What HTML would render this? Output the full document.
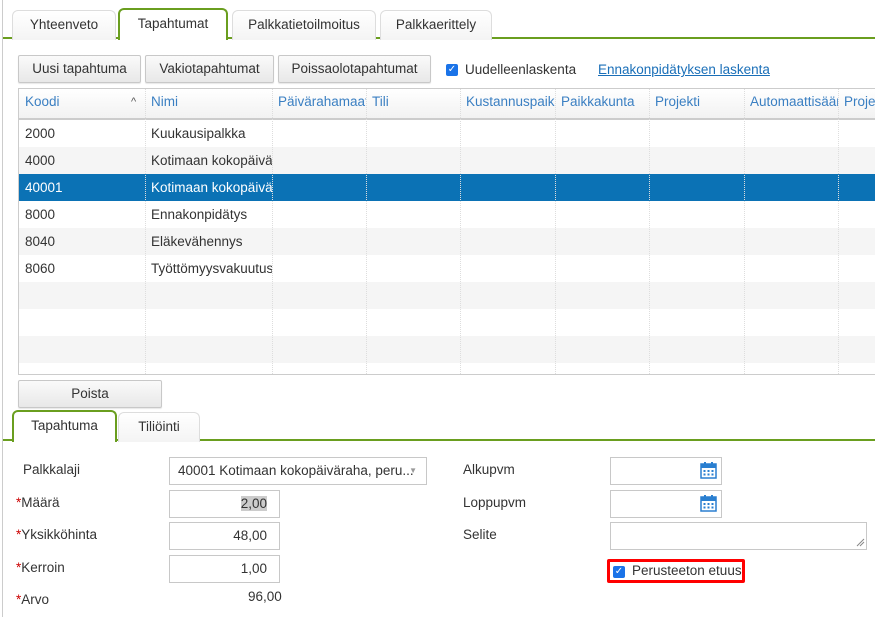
<!DOCTYPE html>
<html><head><meta charset="utf-8"><style>
*{box-sizing:border-box;margin:0;padding:0}
body{width:875px;height:617px;overflow:hidden;background:#fff;font-family:"Liberation Sans","DejaVu Sans",sans-serif;font-size:13px;color:#333;position:relative}
.a{position:absolute}
.tab{position:absolute;height:30px;border:1px solid #ddd;border-bottom:none;border-radius:6px 6px 0 0;background:linear-gradient(#fff,#f4f4f4);text-align:center;line-height:28px;font-size:13.5px;color:#333}
.tab.on{border:2px solid #6a9e1f;border-bottom:none;background:#fff;height:32px;z-index:2}
.btn{position:absolute;height:28px;border:1px solid #c8c8c8;border-radius:2px;background:linear-gradient(#fafafa,#e8e8e8);text-align:center;line-height:26px;font-size:13.5px;color:#333;box-shadow:0 1px 1px rgba(0,0,0,.1)}
.hd{position:absolute;top:88px;height:32px;line-height:28px;color:#3a7fc2;font-size:13.5px;padding-left:6px;white-space:nowrap;overflow:hidden}
.row{position:absolute;left:19px;width:856px;height:27px;line-height:27px;font-size:13.5px}
.vl{position:absolute;top:89px;height:285px;border-left:1px dotted #ddd}
.inp{position:absolute;border:1px solid #c8c8c8;background:#fff;height:28px;text-align:right;padding-right:12px;line-height:26px;font-size:13.5px}
.lbl{position:absolute;font-size:13.5px;color:#333}
.req{color:#c00}
svg.cal{position:absolute;width:17px;height:18px}
</style></head><body>
<div class="a" style="left:2px;top:0;width:1px;height:617px;background:#ccc"></div>
<div class="a" style="left:3px;top:37px;width:872px;height:2px;background:#6a9e1f"></div>
<div class="tab" style="left:12px;top:10px;width:104px">Yhteenveto</div>
<div class="tab on" style="left:118px;top:8px;width:110px">Tapahtumat</div>
<div class="tab" style="left:232px;top:10px;width:144px">Palkkatietoilmoitus</div>
<div class="tab" style="left:380px;top:10px;width:112px">Palkkaerittely</div>
<div class="btn" style="left:18px;top:55px;width:123px">Uusi tapahtuma</div>
<div class="btn" style="left:145px;top:55px;width:129px">Vakiotapahtumat</div>
<div class="btn" style="left:278px;top:55px;width:153px">Poissaolotapahtumat</div>
<div class="a" style="left:446px;top:64px;width:12px;height:12px;background:#1a73e8;border-radius:2px;color:#fff;font-size:10px;line-height:12px;text-align:center">✓</div>
<div class="lbl" style="left:465px;top:62px">Uudelleenlaskenta</div>
<div class="lbl" style="left:598px;top:62px;color:#1a6fb8;text-decoration:underline">Ennakonpidätyksen laskenta</div>
<div class="a" style="left:18px;top:88px;width:857px;height:287px;border:1px solid #ccc;border-right:none"></div>
<div class="a" style="left:19px;top:89px;width:856px;height:31px;background:linear-gradient(#fff,#f2f2f2);border-bottom:2px solid #ccc"></div>
<div class="row" style="top:147px;background:#f5f5f5"></div>
<div class="row" style="top:174px;background:#0b72b5"></div>
<div class="row" style="top:228px;background:#f5f5f5"></div>
<div class="row" style="top:282px;background:#f5f5f5"></div>
<div class="row" style="top:336px;background:#f5f5f5"></div>
<div class="vl" style="left:145px"></div><div class="vl" style="left:272px"></div><div class="vl" style="left:366px"></div><div class="vl" style="left:460px"></div><div class="vl" style="left:555px"></div><div class="vl" style="left:649px"></div><div class="vl" style="left:744px"></div><div class="vl" style="left:838px"></div>
<div class="hd" style="left:19px;width:126px">Koodi<span style="position:absolute;left:112px;color:#555;font-size:11px">^</span></div>
<div class="hd" style="left:145px;width:127px">Nimi</div>
<div class="hd" style="left:272px;width:94px">Päivärahamaat</div>
<div class="hd" style="left:366px;width:94px">Tili</div>
<div class="hd" style="left:460px;width:95px">Kustannuspaikka</div>
<div class="hd" style="left:555px;width:94px">Paikkakunta</div>
<div class="hd" style="left:649px;width:95px">Projekti</div>
<div class="hd" style="left:744px;width:94px">Automaattisäänt</div>
<div class="hd" style="left:838px;width:37px">Projekti</div>
<div class="a" style="left:25px;top:120px;line-height:27px;font-size:13.5px">2000<br>4000<br><span style="color:#fff">40001</span><br>8000<br>8040<br>8060</div>
<div class="a" style="left:151px;top:120px;width:121px;overflow:hidden;white-space:nowrap;line-height:27px;font-size:13.5px">Kuukausipalkka<br>Kotimaan kokopäiväraha<br><span style="color:#fff">Kotimaan kokopäiväraha</span><br>Ennakonpidätys<br>Eläkevähennys<br>Työttömyysvakuutus</div>
<div class="btn" style="left:18px;top:380px;width:144px">Poista</div>
<div class="a" style="left:3px;top:439px;width:872px;height:2px;background:#6a9e1f"></div>
<div class="tab" style="left:118px;top:412px;width:82px">Tiliöinti</div>
<div class="tab on" style="left:12px;top:410px;width:105px">Tapahtuma</div>
<div class="lbl" style="left:23px;top:462px">Palkkalaji</div>
<div class="inp" style="left:169px;top:457px;width:258px;text-align:left;padding-left:8px">40001 Kotimaan kokopäiväraha, peru...<span style="position:absolute;right:9px;top:0;color:#999;font-size:8px">▼</span></div>
<div class="lbl" style="left:16px;top:495px"><span class="req">*</span>Määrä</div>
<div class="inp" style="left:169px;top:490px;width:111px"><span style="background:#ccc">2,00</span></div>
<div class="lbl" style="left:16px;top:527px"><span class="req">*</span>Yksikköhinta</div>
<div class="inp" style="left:169px;top:522px;width:111px">48,00</div>
<div class="lbl" style="left:16px;top:560px"><span class="req">*</span>Kerroin</div>
<div class="inp" style="left:169px;top:555px;width:111px">1,00</div>
<div class="lbl" style="left:16px;top:592px"><span class="req">*</span>Arvo</div>
<div class="lbl" style="left:248px;top:589px">96,00</div>
<div class="lbl" style="left:463px;top:462px">Alkupvm</div>
<div class="inp" style="left:610px;top:457px;width:112px"></div>
<svg class="cal" style="left:700px;top:461px" viewBox="0 0 17 18"><rect x="1" y="3" width="15" height="14" fill="#fff" stroke="#2a7fd0" stroke-width="1.5"/><rect x="1" y="3" width="15" height="4" fill="#2a7fd0"/><rect x="4" y="1" width="2" height="4" fill="#2a7fd0"/><rect x="11" y="1" width="2" height="4" fill="#2a7fd0"/><g fill="#2a7fd0"><rect x="3.5" y="9" width="2" height="2"/><rect x="7.5" y="9" width="2" height="2"/><rect x="11.5" y="9" width="2" height="2"/><rect x="3.5" y="12.5" width="2" height="2"/><rect x="7.5" y="12.5" width="2" height="2"/><rect x="11.5" y="12.5" width="2" height="2"/></g></svg>
<div class="lbl" style="left:463px;top:495px">Loppupvm</div>
<div class="inp" style="left:610px;top:490px;width:112px"></div>
<svg class="cal" style="left:700px;top:494px" viewBox="0 0 17 18"><rect x="1" y="3" width="15" height="14" fill="#fff" stroke="#2a7fd0" stroke-width="1.5"/><rect x="1" y="3" width="15" height="4" fill="#2a7fd0"/><rect x="4" y="1" width="2" height="4" fill="#2a7fd0"/><rect x="11" y="1" width="2" height="4" fill="#2a7fd0"/><g fill="#2a7fd0"><rect x="3.5" y="9" width="2" height="2"/><rect x="7.5" y="9" width="2" height="2"/><rect x="11.5" y="9" width="2" height="2"/><rect x="3.5" y="12.5" width="2" height="2"/><rect x="7.5" y="12.5" width="2" height="2"/><rect x="11.5" y="12.5" width="2" height="2"/></g></svg>
<div class="lbl" style="left:463px;top:527px">Selite</div>
<div class="inp" style="left:610px;top:522px;width:257px"></div>
<svg class="a" style="left:856px;top:538px" width="9" height="9"><path d="M1 8L8 1M4 8L8 4" stroke="#888" stroke-width="1"/></svg>
<div class="a" style="left:607px;top:559px;width:138px;height:24px;border:3px solid #f00;border-radius:2px"></div>
<div class="a" style="left:613px;top:566px;width:12px;height:12px;background:#1a73e8;border-radius:2px;color:#fff;font-size:10px;line-height:12px;text-align:center">✓</div>
<div class="lbl" style="left:632px;top:563px">Perusteeton etuus</div>
</body></html>
